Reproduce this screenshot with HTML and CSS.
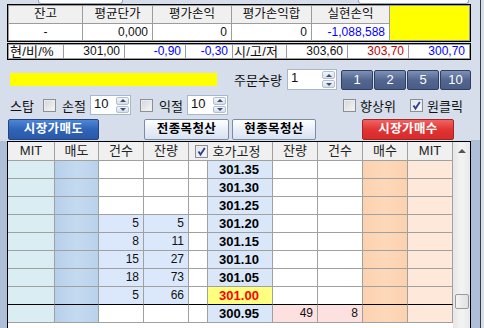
FILE: index.html
```html
<!DOCTYPE html>
<html lang="ko">

<head>
    <meta charset="UTF-8">
    <title>호가주문</title>
    <link rel="stylesheet" href="styles.css">
</head>

<body>
    <div class="app">
        <div class="main">
            <div class="top-stubs">
                <span class="stub stub-a"></span>
                <span class="stub stub-b"></span>
            </div>

            <!-- 잔고 요약 -->
            <div class="summary">
                <div class="hd">잔고</div>
                <div class="hd">평균단가</div>
                <div class="hd">평가손익</div>
                <div class="hd">평가손익합</div>
                <div class="hd">실현손익</div>
                <div class="flag"></div>
                <div class="val center">-</div>
                <div class="val">0,000</div>
                <div class="val">0</div>
                <div class="val">0</div>
                <div class="val blue">-1,088,588</div>
            </div>

            <!-- 현재가 / 고저 -->
            <div class="quote">
                <div class="lbl">현/비/%</div>
                <div class="val">301,00</div>
                <div class="val blue">-0,90</div>
                <div class="val blue">-0,30</div>
                <div class="lbl">시/고/저</div>
                <div class="val">303,60</div>
                <div class="val red">303,70</div>
                <div class="val blue">300,70</div>
            </div>

            <div class="order-row">
                <div class="msg-bar"></div>
                <span class="qty-label">주문수량</span>
                <div class="spin spin-qty">
                    <span class="spin-val">1</span>
                    <span class="spin-btns"><i class="up"></i><i class="down"></i></span>
                </div>
                <div class="qty-btns">
                    <a href="javascript:;" class="qbtn">1</a>
                    <a href="javascript:;" class="qbtn">2</a>
                    <a href="javascript:;" class="qbtn">5</a>
                    <a href="javascript:;" class="qbtn q10">10</a>
                </div>
            </div>

            <div class="stop-row">
                <span class="stop-label">스탑</span>
                <span class="chk"></span>
                <span class="opt-label">손절</span>
                <div class="spin spin-sm">
                    <span class="spin-val">10</span>
                    <span class="spin-btns"><i class="up"></i><i class="down"></i></span>
                </div>
                <span class="chk chk-gap"></span>
                <span class="opt-label">익절</span>
                <div class="spin spin-sm">
                    <span class="spin-val">10</span>
                    <span class="spin-btns"><i class="up"></i><i class="down"></i></span>
                </div>
                <span class="chk chk-top"></span>
                <span class="opt-label2">향상위</span>
                <span class="chk checked chk-one"><svg viewBox="0 0 11 11" width="11" height="11"><path d="M2.5 5.5 L4.5 8.5 L8.8 2" fill="none" stroke="#2a3d8f" stroke-width="1.8"/></svg></span>
                <span class="opt-label2">원클릭</span>
            </div>

            <div class="btn-row">
                <a href="javascript:;" class="big-btn sell">시장가매도</a>
                <a href="javascript:;" class="big-btn clear clear-all">전종목청산</a>
                <a href="javascript:;" class="big-btn clear clear-cur">현종목청산</a>
                <a href="javascript:;" class="big-btn buy">시장가매수</a>
            </div>

            <div class="book-row">
                <div class="book">
                    <div class="grid">
                        <div class="row head">
                            <div>MIT</div>
                            <div>매도</div>
                            <div>건수</div>
                            <div>잔량</div>
                            <div class="fix"><span class="chk checked"><svg viewBox="0 0 11 11" width="11" height="11"><path d="M2.5 5.5 L4.5 8.5 L8.8 2" fill="none" stroke="#2a3d8f" stroke-width="1.8"/></svg></span>호가고정</div>
                            <div>잔량</div>
                            <div>건수</div>
                            <div>매수</div>
                            <div>MIT</div>
                        </div>

                        <div class="row">
                            <div class="mit-s"></div><div class="sell-c"></div><div class="num"></div><div class="num"></div>
                            <div class="blank"></div><div class="price">301.35</div>
                            <div class="num"></div><div class="num"></div><div class="buy-c"></div><div class="mit-b"></div>
                        </div>
                        <div class="row">
                            <div class="mit-s"></div><div class="sell-c"></div><div class="num"></div><div class="num"></div>
                            <div class="blank"></div><div class="price">301.30</div>
                            <div class="num"></div><div class="num"></div><div class="buy-c"></div><div class="mit-b"></div>
                        </div>
                        <div class="row">
                            <div class="mit-s"></div><div class="sell-c"></div><div class="num"></div><div class="num"></div>
                            <div class="blank"></div><div class="price">301.25</div>
                            <div class="num"></div><div class="num"></div><div class="buy-c"></div><div class="mit-b"></div>
                        </div>
                        <div class="row">
                            <div class="mit-s"></div><div class="sell-c"></div><div class="num ask">5</div><div class="num ask">5</div>
                            <div class="blank"></div><div class="price">301.20</div>
                            <div class="num"></div><div class="num"></div><div class="buy-c"></div><div class="mit-b"></div>
                        </div>
                        <div class="row">
                            <div class="mit-s"></div><div class="sell-c"></div><div class="num ask">8</div><div class="num ask">11</div>
                            <div class="blank"></div><div class="price">301.15</div>
                            <div class="num"></div><div class="num"></div><div class="buy-c"></div><div class="mit-b"></div>
                        </div>
                        <div class="row">
                            <div class="mit-s"></div><div class="sell-c"></div><div class="num ask">15</div><div class="num ask">27</div>
                            <div class="blank"></div><div class="price">301.10</div>
                            <div class="num"></div><div class="num"></div><div class="buy-c"></div><div class="mit-b"></div>
                        </div>
                        <div class="row">
                            <div class="mit-s"></div><div class="sell-c"></div><div class="num ask">18</div><div class="num ask">73</div>
                            <div class="blank"></div><div class="price">301.05</div>
                            <div class="num"></div><div class="num"></div><div class="buy-c"></div><div class="mit-b"></div>
                        </div>
                        <div class="row sep">
                            <div class="mit-s"></div><div class="sell-c"></div><div class="num ask">5</div><div class="num ask">66</div>
                            <div class="blank"></div><div class="price cur">301.00</div>
                            <div class="num"></div><div class="num"></div><div class="buy-c"></div><div class="mit-b"></div>
                        </div>
                        <div class="row">
                            <div class="mit-s"></div><div class="sell-c"></div><div class="num"></div><div class="num"></div>
                            <div class="blank"></div><div class="price">300.95</div>
                            <div class="num bid">49</div><div class="num bid">8</div><div class="buy-c"></div><div class="mit-b"></div>
                        </div>
                    </div>
                    <div class="scrollbar">
                        <div class="sb-up"><i></i></div>
                        <div class="sb-thumb"></div>
                    </div>
                </div>
            </div>
        </div>

        <div class="side">
            <div class="side-top"></div>
            <div class="side-bottom"></div>
        </div>
    </div>
</body>

</html>
```

FILE: styles.css
```css
* {
    margin: 0;
    padding: 0;
    box-sizing: border-box;
}

a {
    text-decoration: none;
}

body {
    width: 484px;
    height: 328px;
    overflow: hidden;
    background-color: #d5deea;
    font-family: "Liberation Sans", "Noto Sans CJK KR", sans-serif;
    font-size: 12px;
    color: #111;
}

.app {
    display: flex;
    height: 328px;
}

.main {
    width: 471px;
    display: flex;
    flex-direction: column;
}

/* 위쪽에 잘린 입력칸 */
.top-stubs {
    height: 9px;
    display: flex;
}

.stub {
    display: block;
    height: 4px;
    background-color: #fbfcfd;
    border: 1px solid #9aa6b8;
    border-top: none;
    border-radius: 0 0 3px 3px;
}

.stub-a {
    margin-left: 38px;
    width: 85px;
}

.stub-b {
    margin-left: 235px;
    width: 111px;
}

/* 요약 테이블 */
.summary {
    margin-left: 7px;
    width: 464px;
    height: 38px;
    border: 1px solid #000;
    padding: 1px;
    background-color: #9c9c9c;
    display: grid;
    grid-template-columns: 73px 69px 78px 79px 77px 79px;
    grid-template-rows: 17px 16px;
    gap: 1px;
}

.summary .hd {
    background-color: #f0f0f0;
    text-align: center;
    line-height: 17px;
    font-size: 12.5px;
}

.summary .flag {
    grid-column: 6;
    grid-row: 1 / 3;
    background-color: #ffff00;
}

.val {
    background-color: #fff;
    text-align: right;
    padding-right: 4px;
    line-height: 16px;
    font-size: 12px;
}

.center {
    text-align: center;
    padding-right: 0;
}

.blue {
    color: #0000ff;
}

.red {
    color: #c00000;
}

.quote {
    margin-top: 1px;
    margin-left: 7px;
    width: 464px;
    height: 17px;
    border: 1px solid #000;
    padding: 1px;
    background-color: #9c9c9c;
    display: grid;
    grid-template-columns: 54px 60px 60px 46px 53px 60px 60px 60px;
    grid-template-rows: 13px;
    gap: 1px;
}

.quote .val,
.quote .lbl {
    line-height: 13px;
}

.quote .lbl {
    background-color: #fafafa;
    padding-left: 1px;
    font-size: 13px;
    letter-spacing: 0.2px;
    white-space: nowrap;
    overflow: hidden;
}

/* 주문수량 줄 */
.order-row {
    margin-top: 9px;
    height: 21px;
    display: flex;
    align-items: center;
}

.msg-bar {
    margin-left: 10px;
    width: 207px;
    height: 13px;
    background-color: #ffff00;
}

.qty-label {
    margin-left: 17px;
    width: 53px;
    font-size: 13px;
    white-space: nowrap;
}

.spin {
    display: flex;
    background-color: #fff;
    border: 1px solid #a9b7ca;
}

.spin-qty {
    width: 50px;
    height: 21px;
}

.spin-sm {
    width: 41px;
    height: 20px;
}

.spin-val {
    flex: 1;
    padding-left: 3px;
    font-size: 13px;
    line-height: 15px;
}

.spin-btns {
    width: 14px;
    display: flex;
    flex-direction: column;
    padding: 1px 1px 1px 0;
    gap: 1px;
}

.spin-btns i {
    flex: 1;
    display: flex;
    align-items: center;
    justify-content: center;
    background: linear-gradient(#f4f7fb, #d6deea);
    border: 1px solid #b2bfd2;
    border-radius: 2px;
}

.spin-btns i::after {
    content: "";
    border-left: 3px solid transparent;
    border-right: 3px solid transparent;
}

.spin-btns .up::after {
    border-bottom: 3px solid #3c4f7c;
}

.spin-btns .down::after {
    border-top: 3px solid #3c4f7c;
}

.qty-btns {
    margin-left: 4px;
    display: flex;
    gap: 1px;
}

.qbtn {
    display: block;
    width: 32px;
    height: 20px;
    line-height: 18px;
    text-align: center;
    color: #fff;
    font-size: 13px;
    background: linear-gradient(#7d90b6, #53668f 50%, #4a5d86);
    border: 1px solid #2f3f60;
    border-radius: 2px;
}

.q10 {
    width: 31px;
}

/* 스탑 줄 */
.stop-row {
    margin-top: 5px;
    height: 21px;
    display: flex;
    align-items: center;
}

.stop-label {
    margin-left: 10px;
    width: 33px;
    font-size: 13px;
}

.chk {
    display: inline-flex;
    align-items: center;
    justify-content: center;
    width: 13px;
    height: 13px;
    border: 1px solid #8c8f93;
    background: linear-gradient(135deg, #d2d4d8, #f8f8f9);
    box-shadow: inset 0 0 0 1px #ececec;
}

.checked {
    background: linear-gradient(135deg, #e2e4e8, #fafafa);
}

.opt-label {
    margin-left: 6px;
    width: 28px;
    font-size: 13px;
}

.chk-gap {
    margin-left: 9px;
}

.chk-top {
    margin-left: 115px;
}

.chk-one {
    margin-left: 12px;
}

.opt-label2 {
    margin-left: 4px;
    width: 38px;
    font-size: 13px;
}

/* 큰 버튼 줄 */
.btn-row {
    margin-top: 4px;
    height: 21px;
    display: flex;
}

.big-btn {
    display: block;
    height: 21px;
    line-height: 19px;
    text-align: center;
    font-weight: bold;
    font-size: 12.5px;
    letter-spacing: 0.4px;
    border-radius: 2px;
}

.sell {
    margin-left: 8px;
    width: 91px;
    color: #fff;
    background: linear-gradient(#4f86d6, #2f63b8 50%, #2a58a8);
    border: 1px solid #244680;
}

.clear {
    color: #000;
    background: linear-gradient(#ffffff, #e9eff8 50%, #d8e2f0);
    border: 1px solid #7d8ca6;
}

.clear-all {
    margin-left: 45px;
    width: 85px;
}

.clear-cur {
    margin-left: 3px;
    width: 84px;
}

.buy {
    margin-left: 46px;
    width: 92px;
    color: #fff;
    background: linear-gradient(#f26363, #e23434 50%, #d72a2a);
    border: 1px solid #9c2727;
}

/* 호가창 */
.book-row {
    margin-top: 1px;
    flex: 1;
    padding-left: 7px;
    background: linear-gradient(to right, #aebfd7 7px, #d5deea 7px);
}

.book {
    width: 464px;
    height: 200px;
    border: 1px solid #000;
    border-bottom: none;
    display: flex;
    background-color: #fff;
}

.grid {
    display: grid;
    grid-template-columns: 47px 44px 45px 45px 19px 65px 45px 45px 45px 45px;
    grid-template-rows: 19px;
    grid-auto-rows: 18px;
    align-content: start;
}

.row {
    display: contents;
}

.row > div {
    border-right: 1px solid #a0a0a0;
    border-bottom: 1px solid #a0a0a0;
}

.row.sep > div {
    border-bottom-color: #000;
}

.head > div {
    background-color: #f0f0f0;
    text-align: center;
    font-size: 13px;
    line-height: 17px;
    color: #222;
}

.head .fix {
    grid-column: span 2;
    display: flex;
    align-items: center;
    justify-content: center;
    gap: 5px;
    padding-right: 6px;
}

.mit-s {
    background-color: #daedf3;
}

.sell-c {
    background: linear-gradient(to right, #b6cfea, #c4daf0 50%, #b9d2ec);
}

.blank {
    background-color: #fff;
}

.num {
    text-align: right;
    padding-right: 4px;
    font-size: 12px;
    line-height: 17px;
    color: #111;
}

.ask {
    background-color: #dbe8fb;
}

.bid {
    background-color: #fde1e1;
}

.price {
    background-color: #d9e7f9;
    text-align: center;
    font-weight: bold;
    font-size: 13px;
    line-height: 17px;
    color: #000;
    padding-right: 2px;
}

.price.cur {
    background-color: #ffff80;
    color: #ff0000;
}

.buy-c {
    background: linear-gradient(to right, #fbd2b0, #fdd8b9 50%, #fbd2b0);
}

.mit-b {
    background-color: #fde8d9;
}

.scrollbar {
    width: 17px;
    background: linear-gradient(to right, #e6e6e6, #f3f3f3 50%, #e8e8e8);
    display: flex;
    flex-direction: column;
}

.sb-up {
    height: 17px;
    display: flex;
    align-items: center;
    justify-content: center;
}

.sb-up i {
    border-left: 4px solid transparent;
    border-right: 4px solid transparent;
    border-bottom: 4px solid #555;
}

.sb-thumb {
    margin-top: 135px;
    margin-left: 2px;
    width: 14px;
    height: 15px;
    background: linear-gradient(to right, #f4f4f4, #e0e0e0);
    border: 1px solid #9a9a9a;
    border-radius: 2px;
}

/* 오른쪽 패널 */
.side {
    width: 13px;
    display: flex;
    flex-direction: column;
}

.side-top {
    height: 140px;
    margin-left: 9px;
    border-left: 1px solid #3a3a3a;
    background-color: #d5deea;
}

.side-bottom {
    flex: 1;
    background: linear-gradient(to right, #aebfd7 9px, #3a3a3a 9px, #3a3a3a 10px, #d5deea 10px);
}
```
